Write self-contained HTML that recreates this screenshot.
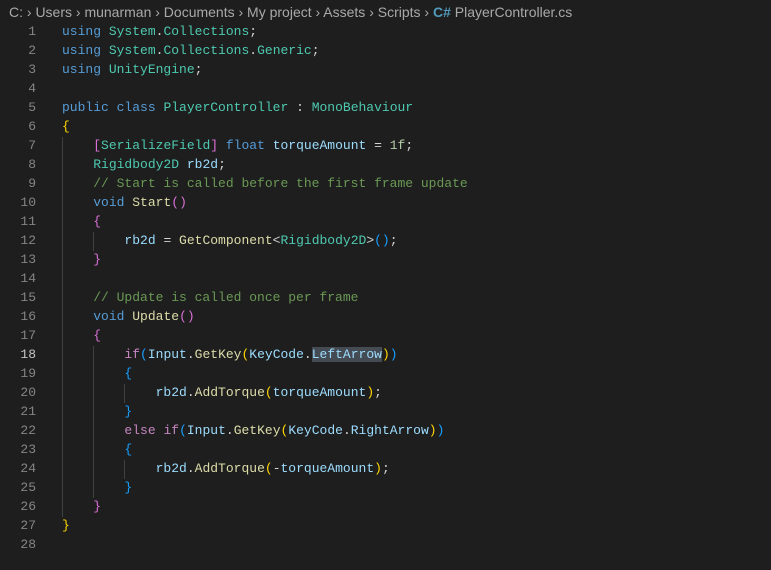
<!DOCTYPE html>
<html><head><meta charset="utf-8"><style>
body{margin:0;width:771px;height:570px;background:#1e1e1e;overflow:hidden;position:relative;font-family:"Liberation Mono",monospace;font-size:13px}
.bc{position:absolute;left:9px;top:3px;font-family:"Liberation Sans",sans-serif;font-size:14px;color:#a9a9a9;white-space:pre;line-height:18px}
.w{position:absolute;left:0;top:1px;width:771px;height:569px}
.ln{position:absolute;left:0;width:36px;text-align:right;color:#858585;line-height:19px}
.c{position:absolute;left:62px;white-space:pre;line-height:19px;color:#d4d4d4}
.g{position:absolute;width:1px;background:#404040}
.k{color:#569cd6}.t{color:#4ec9b0}.v{color:#9cdcfe}.f{color:#dcdcaa}.cm{color:#6a9955}.n{color:#b5cea8}.p{color:#c586c0}
.b1{color:#ffd700}.b2{color:#da70d6}.b3{color:#179fff}
.sel{background:#454b53}
</style></head><body>
<div class="bc">C: › Users › munarman › Documents › My project › Assets › Scripts › <span style="color:#519aba;font-weight:bold">C#</span> PlayerController.cs</div>
<div class="w">
<div class="g" style="left:62px;top:136px;height:380px"></div>
<div class="g" style="left:93px;top:231px;height:19px"></div>
<div class="g" style="left:93px;top:345px;height:152px"></div>
<div class="g" style="left:124px;top:459px;height:19px"></div>
<div class="g" style="left:124px;top:383px;height:19px"></div>

<div class="ln" style="top:21px">1</div><div class="c" style="top:21px"><span class="k">using</span> <span class="t">System</span>.<span class="t">Collections</span>;</div>
<div class="ln" style="top:40px">2</div><div class="c" style="top:40px"><span class="k">using</span> <span class="t">System</span>.<span class="t">Collections</span>.<span class="t">Generic</span>;</div>
<div class="ln" style="top:59px">3</div><div class="c" style="top:59px"><span class="k">using</span> <span class="t">UnityEngine</span>;</div>
<div class="ln" style="top:78px">4</div>
<div class="ln" style="top:97px">5</div><div class="c" style="top:97px"><span class="k">public</span> <span class="k">class</span> <span class="t">PlayerController</span> : <span class="t">MonoBehaviour</span></div>
<div class="ln" style="top:116px">6</div><div class="c" style="top:116px"><span class="b1">{</span></div>
<div class="ln" style="top:135px">7</div><div class="c" style="top:135px">    <span class="b2">[</span><span class="t">SerializeField</span><span class="b2">]</span> <span class="k">float</span> <span class="v">torqueAmount</span> = <span class="n">1f</span>;</div>
<div class="ln" style="top:154px">8</div><div class="c" style="top:154px">    <span class="t">Rigidbody2D</span> <span class="v">rb2d</span>;</div>
<div class="ln" style="top:173px">9</div><div class="c" style="top:173px">    <span class="cm">// Start is called before the first frame update</span></div>
<div class="ln" style="top:192px">10</div><div class="c" style="top:192px">    <span class="k">void</span> <span class="f">Start</span><span class="b2">()</span></div>
<div class="ln" style="top:211px">11</div><div class="c" style="top:211px">    <span class="b2">{</span></div>
<div class="ln" style="top:230px">12</div><div class="c" style="top:230px">        <span class="v">rb2d</span> = <span class="f">GetComponent</span>&lt;<span class="t">Rigidbody2D</span>&gt;<span class="b3">()</span>;</div>
<div class="ln" style="top:249px">13</div><div class="c" style="top:249px">    <span class="b2">}</span></div>
<div class="ln" style="top:268px">14</div>
<div class="ln" style="top:287px">15</div><div class="c" style="top:287px">    <span class="cm">// Update is called once per frame</span></div>
<div class="ln" style="top:306px">16</div><div class="c" style="top:306px">    <span class="k">void</span> <span class="f">Update</span><span class="b2">()</span></div>
<div class="ln" style="top:325px">17</div><div class="c" style="top:325px">    <span class="b2">{</span></div>
<div class="ln" style="top:344px;color:#c6c6c6">18</div><div class="c" style="top:344px">        <span class="p">if</span><span class="b3">(</span><span class="v">Input</span>.<span class="f">GetKey</span><span class="b1">(</span><span class="v">KeyCode</span>.<span class="v sel">LeftArrow</span><span class="b1">)</span><span class="b3">)</span></div>
<div class="ln" style="top:363px">19</div><div class="c" style="top:363px">        <span class="b3">{</span></div>
<div class="ln" style="top:382px">20</div><div class="c" style="top:382px">            <span class="v">rb2d</span>.<span class="f">AddTorque</span><span class="b1">(</span><span class="v">torqueAmount</span><span class="b1">)</span>;</div>
<div class="ln" style="top:401px">21</div><div class="c" style="top:401px">        <span class="b3">}</span></div>
<div class="ln" style="top:420px">22</div><div class="c" style="top:420px">        <span class="p">else</span> <span class="p">if</span><span class="b3">(</span><span class="v">Input</span>.<span class="f">GetKey</span><span class="b1">(</span><span class="v">KeyCode</span>.<span class="v">RightArrow</span><span class="b1">)</span><span class="b3">)</span></div>
<div class="ln" style="top:439px">23</div><div class="c" style="top:439px">        <span class="b3">{</span></div>
<div class="ln" style="top:458px">24</div><div class="c" style="top:458px">            <span class="v">rb2d</span>.<span class="f">AddTorque</span><span class="b1">(</span>-<span class="v">torqueAmount</span><span class="b1">)</span>;</div>
<div class="ln" style="top:477px">25</div><div class="c" style="top:477px">        <span class="b3">}</span></div>
<div class="ln" style="top:496px">26</div><div class="c" style="top:496px">    <span class="b2">}</span></div>
<div class="ln" style="top:515px">27</div><div class="c" style="top:515px"><span class="b1">}</span></div>
<div class="ln" style="top:534px">28</div>
</div>
</body></html>
